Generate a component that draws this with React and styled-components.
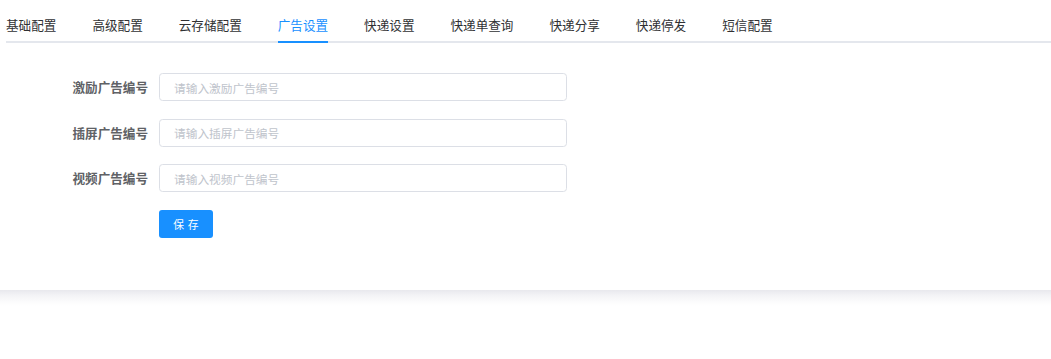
import React, { useState } from "react";
import styled, { createGlobalStyle } from "styled-components";

const GlobalStyle = createGlobalStyle`
  html, body {
    margin: 0;
    padding: 0;
    background: #ffffff;
    font-family: "Noto Sans CJK SC", "Noto Sans", "Liberation Sans", sans-serif;
  }
  * { box-sizing: border-box; }
`;

const Card = styled.div`
  background: #ffffff;
  padding-top: 9px;
  padding-bottom: 52px;
`;

const CardShadow = styled.div`
  height: 16px;
  background: linear-gradient(
    to bottom,
    rgba(30, 30, 80, 0.1) 0%,
    rgba(30, 30, 80, 0.05) 35%,
    rgba(30, 30, 80, 0.015) 75%,
    rgba(30, 30, 80, 0) 100%
  );
`;

const TabNav = styled.div`
  display: flex;
  margin-left: 6px;
  border-bottom: 2px solid #e4e7ed;
`;

const TabItem = styled.div`
  position: relative;
  height: 32px;
  line-height: 32px;
  padding: 0 18px;
  font-size: 12.6px;
  color: ${(p) => (p.$active ? "#1890ff" : "#303133")};
  cursor: pointer;
  white-space: nowrap;
  &:first-child { padding-left: 0; }
  &::after {
    content: "";
    display: ${(p) => (p.$active ? "block" : "none")};
    position: absolute;
    left: ${(p) => (p.$first ? "0" : "18px")};
    right: 18px;
    bottom: -2px;
    height: 2px;
    background: #1890ff;
  }
`;

const Form = styled.div`
  display: grid;
  grid-template-columns: 90px 408px;
  row-gap: 17.5px;
  padding: 30px 0 0 69px;
`;

const Label = styled.label`
  height: 28px;
  line-height: 28px;
  text-align: right;
  padding-right: 11px;
  font-size: 12.6px;
  font-weight: 700;
  color: #606266;
  white-space: nowrap;
`;

const Input = styled.input`
  height: 28px;
  width: 100%;
  border: 1px solid #dcdfe6;
  border-radius: 3.6px;
  padding: 0 14px;
  font-size: 11.7px;
  font-family: inherit;
  color: #606266;
  outline: none;
  &::placeholder { color: #c0c4cc; }
`;

const Spacer = styled.div``;

const ButtonCell = styled.div`
  display: flex;
  height: 28px;
`;

const SaveButton = styled.button`
  width: 54px;
  height: 28px;
  border: none;
  border-radius: 3px;
  background: #1890ff;
  color: #ffffff;
  font-family: inherit;
  font-size: 10.8px;
  letter-spacing: 0.34em;
  text-indent: 0.34em;
  padding: 0;
  cursor: pointer;
`;

const tabs = ["基础配置", "高级配置", "云存储配置", "广告设置", "快递设置", "快递单查询", "快递分享", "快递停发", "短信配置"];
const fields = ["激励广告编号", "插屏广告编号", "视频广告编号"];

export default function App() {
  const [active, setActive] = useState(3);
  return (
    <>
      <GlobalStyle />
      <Card>
        <TabNav>
          {tabs.map((t, i) => (
            <TabItem key={t} $active={i === active} $first={i === 0} onClick={() => setActive(i)}>
              {t}
            </TabItem>
          ))}
        </TabNav>
        <Form>
          {fields.map((f) => (
            <React.Fragment key={f}>
              <Label>{f}</Label>
              <Input placeholder={`请输入${f}`} />
            </React.Fragment>
          ))}
          <Spacer />
          <ButtonCell>
            <SaveButton>保存</SaveButton>
          </ButtonCell>
        </Form>
      </Card>
      <CardShadow />
    </>
  );
}
